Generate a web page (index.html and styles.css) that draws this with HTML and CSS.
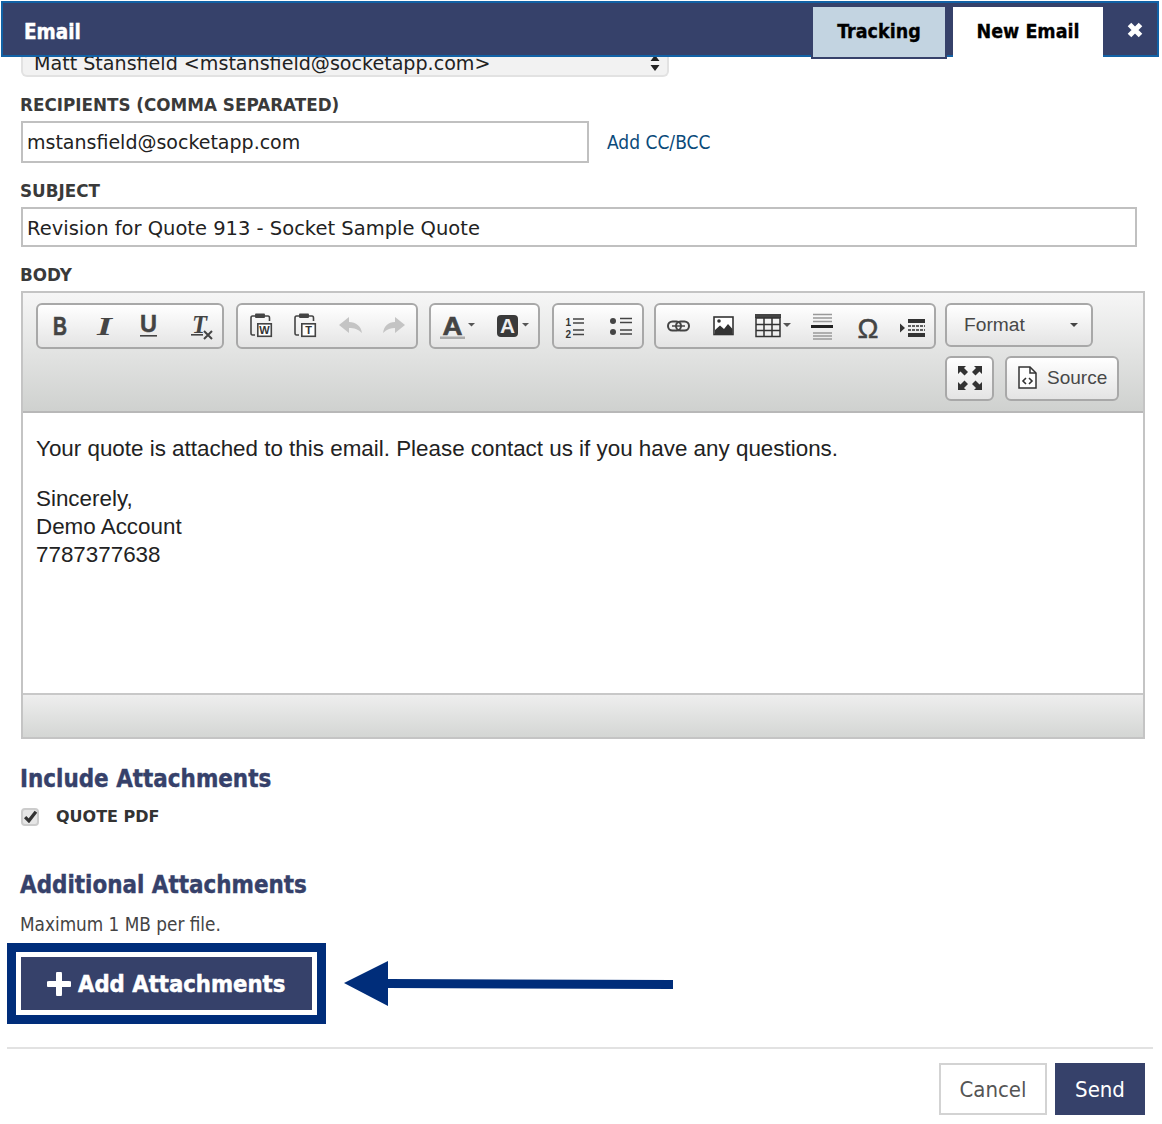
FILE: index.html
```html
<!DOCTYPE html>
<html lang="en">
<head>
<meta charset="utf-8">
<title>Email</title>
<link rel="stylesheet" href="styles.css">
</head>
<body>
<header class="modal-header">
  <h1 class="modal-title">Email</h1>
  <nav class="tabs">
    <span class="tab tab-tracking">Tracking</span>
    <span class="tab tab-new">New Email</span>
  </nav>
  <svg class="close" width="16" height="16" viewBox="0 0 16 16"><path d="M2.500 2.500 13.500 13.500M13.500 2.500 2.500 13.500" stroke="#fff" stroke-width="5"/></svg>
</header>

<main class="form">
  <div class="select">
    <span>Matt Stansfield &lt;mstansfield@socketapp.com&gt;</span>
    <svg width="10" height="18" viewBox="0 0 10 18"><path d="M5 1 9.500 7H.5ZM5 17 .5 11H9.500Z" fill="#222"/></svg>
  </div>

  <label class="label label-recipients">RECIPIENTS (COMMA SEPARATED)</label>
  <div class="recipient-row">
    <div class="input input-recipients">mstansfield@socketapp.com</div>
    <a class="cc-link">Add CC/BCC</a>
  </div>

  <label class="label label-subject">SUBJECT</label>
  <div class="input input-subject">Revision for Quote 913 - Socket Sample Quote</div>

  <label class="label label-body">BODY</label>
  <section class="editor">
    <div class="toolbar">
      <div class="tool-row">
        <div class="group">
          <svg width="44" height="42" viewBox="38 305 44 42"><text x="53" y="335" class="ico-b" textLength="14" lengthAdjust="spacingAndGlyphs">B</text></svg>
          <svg width="44" height="42" viewBox="82 305 44 42"><text x="97" y="335" class="ico-i" textLength="15" lengthAdjust="spacingAndGlyphs">I</text></svg>
          <svg width="46" height="42" viewBox="126 305 46 42"><text x="140" y="332" class="ico-u" textLength="17" lengthAdjust="spacingAndGlyphs">U</text><rect x="140" y="335" width="17" height="1.600" fill="#444"/></svg>
          <svg width="50" height="42" viewBox="172 305 50 42"><text x="192" y="333" class="ico-i" textLength="15" lengthAdjust="spacingAndGlyphs">T</text><rect x="191" y="334" width="12" height="1.600" fill="#444"/><path d="M204 331 212 339M212 331 204 339" stroke="#444" stroke-width="2"/></svg>
        </div>
        <div class="group">
          <svg width="44" height="42" viewBox="238 305 44 42"><path d="M255 316H252.500Q251 316 251 318V333Q251 335 252.500 335H255M265 316H268Q269.500 316 269.500 318V321" fill="none" stroke="#444" stroke-width="1.600"/><rect x="255" y="313.500" width="10" height="4.500" rx="1" fill="#444"/><rect x="257.800" y="323.800" width="13.500" height="12.500" fill="#fff" stroke="#444" stroke-width="1.600"/><text x="264.500" y="334" class="ico-small">W</text></svg>
          <svg width="44" height="42" viewBox="282 305 44 42"><path d="M299 316H296.500Q295 316 295 318V333Q295 335 296.500 335H299M309 316H312Q313.500 316 313.500 318V321" fill="none" stroke="#444" stroke-width="1.600"/><rect x="299" y="313.500" width="10" height="4.500" rx="1" fill="#444"/><rect x="301.800" y="323.800" width="13.500" height="12.500" fill="#fff" stroke="#444" stroke-width="1.600"/><text x="308.500" y="334" class="ico-small">T</text></svg>
          <svg width="46" height="42" viewBox="326 305 46 42"><path d="M339 325 349 317V322C356 322 361 326 362 333 358 329 354 328 349 328V333Z" fill="#c4c4c4"/></svg>
          <svg width="44" height="42" viewBox="372 305 44 42"><path d="M405 325 395 317V322C388 322 384 326 383 333 387 329 391 328 395 328V333Z" fill="#c4c4c4"/></svg>
        </div>
        <div class="group">
          <svg width="55" height="42" viewBox="431 305 55 42"><text x="442.500" y="335" class="ico-b ico-a" textLength="20" lengthAdjust="spacingAndGlyphs">A</text><rect x="440" y="336.500" width="25" height="2.500" fill="#aaa"/><path d="M468 323H475L471.500 326.500Z" fill="#555"/></svg>
          <svg width="52" height="42" viewBox="486 305 52 42"><rect x="497" y="315" width="21" height="22" rx="4" fill="#3a3a3a"/><text x="500" y="333" class="ico-a2" textLength="15" lengthAdjust="spacingAndGlyphs">A</text><path d="M522 323H529L525.500 326.500Z" fill="#555"/></svg>
        </div>
        <div class="group">
          <svg width="44" height="42" viewBox="554 305 44 42"><text x="565.500" y="326" class="ico-num">1</text><text x="565.500" y="338" class="ico-num">2</text><path d="M573 319H584M573 323H584M573 330H584M573 334.500H584" stroke="#444" stroke-width="1.500"/></svg>
          <svg width="44" height="42" viewBox="598 305 44 42"><circle cx="613" cy="321" r="3" fill="#444"/><circle cx="613" cy="332" r="3" fill="#444"/><path d="M620 318.500H632M620 322.500H632M620 330H632M620 334H632" stroke="#444" stroke-width="1.500"/></svg>
        </div>
        <div class="group">
          <svg width="46" height="42" viewBox="656 305 46 42"><g fill="none" stroke="#444" stroke-width="2"><rect x="668" y="321.500" width="13" height="9" rx="4.500"/><rect x="676" y="321.500" width="13" height="9" rx="4.500"/></g><path d="M672 326H685" stroke="#444" stroke-width="1.500"/></svg>
          <svg width="44" height="42" viewBox="702 305 44 42"><rect x="714" y="317" width="19" height="17.500" fill="#fff" stroke="#333" stroke-width="1.600"/><circle cx="719" cy="321" r="1.800" fill="#333"/><path d="M715 334V330L720 325.500 724 329 728 324 732.500 329V334Z" fill="#333"/></svg>
          <svg width="48" height="42" viewBox="746 305 48 42"><rect x="755" y="314" width="26" height="4" fill="#444"/><path d="M756 318H780V336.500H756ZM764 318V336.500M772 318V336.500M756 324.500H780M756 330.500H780" fill="none" stroke="#333" stroke-width="1.500"/><path d="M783 323H791L787 327Z" fill="#555"/></svg>
          <svg width="46" height="42" viewBox="794 305 46 42"><path d="M813 314.500H832M813 318H832M813 321.500H832M813 333H832M813 336H832M813 339H832" stroke="#999" stroke-width="1.300"/><rect x="811" y="325" width="22" height="3" fill="#222"/></svg>
          <svg width="44" height="42" viewBox="840 305 44 42"><text x="868" y="338" class="ico-omega">Ω</text></svg>
          <svg width="50" height="42" viewBox="884 305 50 42"><path d="M900 323.500 905 328 900 332.500Z" fill="#333"/><path d="M908 319H925V323H908ZM908 333H925V337H908Z" fill="#333"/><path d="M908 326H925M908 330H925" stroke="#333" stroke-width="1.400" stroke-dasharray="3 1"/></svg>
        </div>
        <div class="combo">
          <span>Format</span>
          <svg width="8" height="5" viewBox="0 0 8 5"><path d="M0 0H8L4 4Z" fill="#444"/></svg>
        </div>
      </div>
      <div class="tool-row tool-row-2">
        <div class="btn btn-max">
          <svg width="24" height="24" viewBox="0 0 24 24"><path d="M0 0H8L6 2 10 6 6.500 9.500 2.500 5.500 0 8ZM24 0V8L21.500 5.500 17.500 9.500 14 6 18 2 16 0ZM0 24V16L2.500 18.500 6.500 14.500 10 18 6 22 8 24ZM24 24H16L18 22 14 18 17.500 14.500 21.500 18.500 24 16Z" fill="#333"/></svg>
        </div>
        <div class="btn btn-source">
          <svg width="19" height="23" viewBox="0 0 19 23"><path d="M1 1H12L18 7V22H1Z" fill="#fff" stroke="#333" stroke-width="1.500"/><path d="M12 1V7H18" fill="none" stroke="#333" stroke-width="1.500"/><path d="M8 12 5 15 8 18M11 12 14 15 11 18" fill="none" stroke="#333" stroke-width="1.600"/></svg>
          <span>Source</span>
        </div>
      </div>
    </div>
    <div class="content">
      <p>Your quote is attached to this email. Please contact us if you have any questions.</p>
      <p>Sincerely,<br>Demo Account<br>7787377638</p>
    </div>
    <div class="status"></div>
  </section>

  <h2 class="heading heading-include">Include Attachments</h2>
  <div class="check-row">
    <span class="checkbox"><svg width="13" height="13" viewBox="0 0 12 12"><path d="M1 6.500 4.500 10 11 1.500" fill="none" stroke="#333" stroke-width="3"/></svg></span>
    <span class="check-label">QUOTE PDF</span>
  </div>

  <h2 class="heading heading-additional">Additional Attachments</h2>
  <p class="hint">Maximum 1 MB per file.</p>

  <div class="attach-row">
    <div class="highlight">
      <div class="attach-btn">
        <svg width="24" height="24" viewBox="0 0 24 24"><path d="M12 2V22M2 12H22" stroke="#fff" stroke-width="6" stroke-linecap="round"/></svg>
        <span>Add Attachments</span>
      </div>
    </div>
    <svg class="arrow" width="330" height="46" viewBox="0 0 330 46"><path d="M0 22 44 0V18L329 19V28L44 27V45Z" fill="#002d7a"/></svg>
  </div>
</main>

<footer class="footer">
  <a class="btn-cancel">Cancel</a>
  <a class="btn-send">Send</a>
</footer>
</body>
</html>
```
FILE: styles.css
```css
* { box-sizing: border-box; }
html, body { margin: 0; padding: 0; }
body {
  width: 1162px;
  height: 1124px;
  overflow: hidden;
  position: relative;
  background: #fff;
  font-family: "DejaVu Sans", Verdana, sans-serif;
  color: #222;
}
.modal-header {
  position: absolute;
  top: 1px;
  left: 1px;
  width: 1158px;
  height: 56px;
  background: #36416a;
  border: 2px solid #1262a6;
  display: flex;
  align-items: flex-start;
  z-index: 2;
}
.modal-title {
  margin: 15px 0 0 21px;
  font-size: 20.500px;
  line-height: 28px;
  font-weight: 700;
  font-stretch: condensed;
  color: #fff;
  -webkit-text-stroke: 0.4px #fff;
  flex: 1;
}
.tabs { display: flex; gap: 6px; margin-top: 4px; }
.tab {
  display: block;
  text-align: center;
  font-size: 19.500px;
  font-weight: 700;
  font-stretch: condensed;
  color: #000;
  -webkit-text-stroke: 0.3px #000;
}
.tab-tracking {
  width: 136px;
  height: 52px;
  background: #c3d4e1;
  border: 2px solid #36416a;
  border-top: 0;
  line-height: 50px;
}
.tab-new { width: 150px; height: 52px; line-height: 50px; background: #fff; margin-right: 24px; }
.close { margin: 19px 14px 0 0; }

.form { padding: 40px 17px 0 20px; }
.select {
  margin-left: 1px;
  width: 648px;
  height: 37px;
  padding: 11px 7px 0 11px;
  display: flex;
  justify-content: space-between;
  align-items: center;
  background: #f2f2f2;
  border: 2px solid #e2e2e2;
  border-top: 0;
  border-radius: 6px;
  font-size: 19.100px;
  color: #222;
}
.label {
  display: block;
  font-size: 16.800px;
  line-height: 22px;
  font-weight: 700;
  color: #3a3a3a;
}
.label-recipients { margin-top: 17px; }
.label-subject { margin-top: 17px; }
.label-body { margin-top: 17px; }
.recipient-row { display: flex; align-items: center; margin-top: 5px; }
.input {
  margin-left: 1px;
  border: 2px solid #c0c0c0;
  padding: 0 4px;
  font-size: 19px;
  color: #222;
  display: flex;
  align-items: center;
}
.input-recipients { width: 568px; height: 42px; }
.cc-link {
  margin-left: 18px;
  font-size: 19px;
  font-stretch: condensed;
  color: #0a4a7a;
}
.input-subject { width: 1116px; height: 40px; margin-top: 5px; padding-top: 2px; font-size: 19.500px; }
.editor {
  margin: 5px 0 0 1px;
  width: 1124px;
  border: 2px solid #c4c4c4;
}
.toolbar {
  height: 120px;
  padding: 10px 0 0 13px;
  background: linear-gradient(#f6f6f6, #cfd1cf);
  border-bottom: 2px solid #b8b8b8;
}
.tool-row { display: flex; gap: 10px; align-items: flex-start; }
.tool-row-2 { margin: 7px 0 0 909px; gap: 11px; }
.group, .combo, .btn {
  border: 2px solid #a8a8a8;
  border-radius: 6px;
  background: linear-gradient(#fff, #e4e4e4);
}
.group { display: flex; height: 46px; }
.group:nth-child(2) { margin-left: 2px; }
.group:nth-child(3) { margin-left: 1px; }
.group:nth-child(4) { margin-left: 2px; }
.group svg { display: block; flex: none; }
.combo {
  margin-left: -1px;
  width: 148px;
  height: 44px;
  display: flex;
  align-items: center;
  justify-content: space-between;
  padding: 0 13px 0 17px;
  font-family: "Liberation Sans", Arial, sans-serif;
  font-size: 19.200px;
  color: #484848;
}
.btn {
  height: 45px;
  display: flex;
  align-items: center;
  padding-bottom: 2px;
  font-family: "Liberation Sans", Arial, sans-serif;
  font-size: 19px;
  color: #484848;
}
.btn-max { width: 49px; justify-content: center; }
.btn-source { width: 114px; gap: 10px; padding-left: 11px; }
.ico-b { font-family: "Liberation Sans", Arial, sans-serif; font-weight: 700; font-size: 26px; fill: #444; stroke: #444; stroke-width: .6px; }
.ico-i { font-family: "Liberation Serif", serif; font-weight: 700; font-style: italic; font-size: 26px; fill: #444; }
.ico-u { font-family: "Liberation Sans", Arial, sans-serif; font-weight: 700; font-size: 23px; fill: #444; stroke: #444; stroke-width: .4px; }
.ico-a { font-size: 25px; }
.ico-a2 { font-family: "Liberation Sans", Arial, sans-serif; font-weight: 700; font-size: 21px; fill: #eee; }
.ico-small { font-family: "Liberation Sans", Arial, sans-serif; font-weight: 700; font-size: 11px; text-anchor: middle; fill: #333; }
.ico-num { font-family: "Liberation Sans", Arial, sans-serif; font-weight: 700; font-size: 10px; fill: #333; }
.ico-omega { font-family: "Liberation Sans", Arial, sans-serif; font-size: 28px; text-anchor: middle; fill: #444; stroke: #444; stroke-width: .5px; }

.content {
  height: 282px;
  padding: 22px 13px 0 13px;
  background: #fff;
  font-family: "Liberation Sans", Arial, sans-serif;
  font-size: 22.400px;
  line-height: 28px;
  color: #222;
  border-bottom: 2px solid #c8c8c8;
}
.content p { margin: 0 0 22px; }
.status {
  height: 42px;
  background: linear-gradient(#eee, #d4d6d4);
}
.heading {
  margin: 0;
  font-size: 23.900px;
  line-height: 32px;
  font-weight: 700;
  font-stretch: condensed;
  color: #36416a;
  -webkit-text-stroke: 0.4px #36416a;
}
.heading-include { margin-top: 24px; }
.heading-additional { margin-top: 43px; }
.check-row { display: flex; align-items: center; margin-top: 12px; margin-left: 1px; }
.checkbox {
  width: 18px;
  height: 18px;
  border: 2px solid #ccc;
  border-radius: 4px;
  background: #e6e6e6;
  display: flex;
  align-items: center;
  justify-content: center;
}
.check-label {
  margin-left: 17px;
  font-size: 16px;
  font-weight: 700;
  color: #333;
}
.hint {
  margin: 12px 0 0;
  font-size: 18.800px;
  line-height: 24px;
  font-stretch: condensed;
  color: #444;
}
.attach-row { display: flex; align-items: center; margin: 6px 0 0 -13px; }
.highlight {
  width: 319px;
  height: 81px;
  border: 9px solid #002d7a;
  padding: 5px;
  background: #fff;
}
.attach-btn {
  height: 100%;
  background: #36416a;
  display: flex;
  align-items: center;
  padding-left: 26px;
  gap: 7px;
  color: #fff;
  font-size: 23.600px;
  font-weight: 700;
  font-stretch: condensed;
  -webkit-text-stroke: 0.5px #fff;
}
.arrow { margin-left: 18px; }
.footer {
  margin: 23px 9px 0 7px;
  width: 1146px;
  border-top: 2px solid #e2e2e2;
  padding: 14px 8px 0 0;
  display: flex;
  justify-content: flex-end;
  gap: 8px;
}
.btn-cancel, .btn-send {
  height: 52px;
  display: flex;
  align-items: center;
  justify-content: center;
  font-size: 22px;
  font-stretch: condensed;
}
.btn-cancel { width: 108px; border: 2px solid #d3d3d3; color: #555; }
.btn-send { width: 90px; background: #36416a; color: #fff; }
```
